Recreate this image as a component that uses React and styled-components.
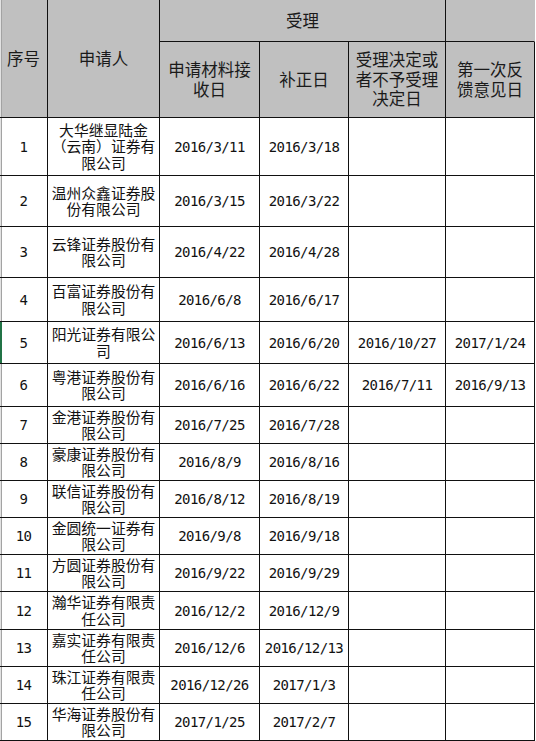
import React from 'react';
import styled, { createGlobalStyle, css } from 'styled-components';

const GlobalStyle = createGlobalStyle`
  html, body {
    margin: 0;
    padding: 0;
    background: #fff;
  }
  body {
    font-family: "Noto Sans CJK SC", "Noto Sans", sans-serif;
    color: #111;
  }
`;

const Sheet = styled.div`
  display: grid;
  grid-template-columns: 48px 112px 100px 89px 97px 89px;
  grid-template-rows: 42px 76px 58px 51px 51px 44px 42px 43px repeat(5, 37px) 38px repeat(3, 37px);
  width: 535px;
`;

const Cell = styled.div`
  box-sizing: border-box;
  display: flex;
  align-items: center;
  justify-content: center;
  text-align: center;
  white-space: pre-line;
  overflow: hidden;
  border-right: 1px solid #111;
  border-bottom: 1px solid #111;
  background: ${({ $head }) => ($head ? '#c0c0c0' : '#fff')};
  grid-column: span ${({ $span }) => $span || 1};
  grid-row: span ${({ $rows }) => $rows || 1};

  ${({ $kind }) =>
    $kind === 'head' &&
    css`
      font-size: 16.5px;
      line-height: 19.5px;
      color: #1a1a1a;
    `}
  ${({ $kind }) =>
    $kind === 'name' &&
    css`
      font-size: 14.8px;
      line-height: 16.5px;
      padding: 0 2px;
    `}
  ${({ $kind }) =>
    $kind === 'mono' &&
    css`
      font-family: "DejaVu Sans Mono", "Liberation Mono", monospace;
      font-size: 14px;
      letter-spacing: -0.6px;
      line-height: 16px;
    `}
  ${({ $edge }) =>
    $edge &&
    css`
      box-shadow: inset 1px 0 #e2e2e2, inset 2px 0 #a3a3a3;
    `}
  ${({ $active }) =>
    $active &&
    css`
      box-shadow: inset 2px 0 #217346;
    `}
  ${({ $open }) =>
    $open &&
    css`
      border-right-color: #c0c0c0;
    `}
`;

const rows = [
  { no: 1, name: '大华继显陆金\n（云南）证券有\n限公司', recv: '2016/3/11', fix: '2016/3/18' },
  { no: 2, name: '温州众鑫证券股\n份有限公司', recv: '2016/3/15', fix: '2016/3/22' },
  { no: 3, name: '云锋证券股份有\n限公司', recv: '2016/4/22', fix: '2016/4/28' },
  { no: 4, name: '百富证券股份有\n限公司', recv: '2016/6/8', fix: '2016/6/17' },
  { no: 5, name: '阳光证券有限公\n司', recv: '2016/6/13', fix: '2016/6/20', decide: '2016/10/27', feedback: '2017/1/24' },
  { no: 6, name: '粤港证券股份有\n限公司', recv: '2016/6/16', fix: '2016/6/22', decide: '2016/7/11', feedback: '2016/9/13' },
  { no: 7, name: '金港证券股份有\n限公司', recv: '2016/7/25', fix: '2016/7/28' },
  { no: 8, name: '豪康证券股份有\n限公司', recv: '2016/8/9', fix: '2016/8/16' },
  { no: 9, name: '联信证券股份有\n限公司', recv: '2016/8/12', fix: '2016/8/19' },
  { no: 10, name: '金圆统一证券有\n限公司', recv: '2016/9/8', fix: '2016/9/18' },
  { no: 11, name: '方圆证券股份有\n限公司', recv: '2016/9/22', fix: '2016/9/29' },
  { no: 12, name: '瀚华证券有限责\n任公司', recv: '2016/12/2', fix: '2016/12/9' },
  { no: 13, name: '嘉实证券有限责\n任公司', recv: '2016/12/6', fix: '2016/12/13' },
  { no: 14, name: '珠江证券有限责\n任公司', recv: '2016/12/26', fix: '2017/1/3' },
  { no: 15, name: '华海证券股份有\n限公司', recv: '2017/1/25', fix: '2017/2/7' },
];

const App = () => {
  return (
    <>
      <GlobalStyle />
      <Sheet>
        <Cell $head $kind="head" $rows={2} $edge>序号</Cell>
        <Cell $head $kind="head" $rows={2}>申请人</Cell>
        <Cell $head $kind="head" $span={3}>受理</Cell>
        <Cell $head $kind="head" $open />
        <Cell $head $kind="head">{'申请材料接\n收日'}</Cell>
        <Cell $head $kind="head">补正日</Cell>
        <Cell $head $kind="head">{'受理决定或\n者不予受理\n决定日'}</Cell>
        <Cell $head $kind="head">{'第一次反\n馈意见日'}</Cell>

        {rows.map((r) => (
          <React.Fragment key={r.no}>
            <Cell $kind="mono" $edge={r.no !== 5} $active={r.no === 5}>{r.no}</Cell>
            <Cell $kind="name">{r.name}</Cell>
            <Cell $kind="mono">{r.recv}</Cell>
            <Cell $kind="mono">{r.fix}</Cell>
            <Cell $kind="mono">{r.decide || ''}</Cell>
            <Cell $kind="mono">{r.feedback || ''}</Cell>
          </React.Fragment>
        ))}
      </Sheet>
    </>
  );
};

export default App;
